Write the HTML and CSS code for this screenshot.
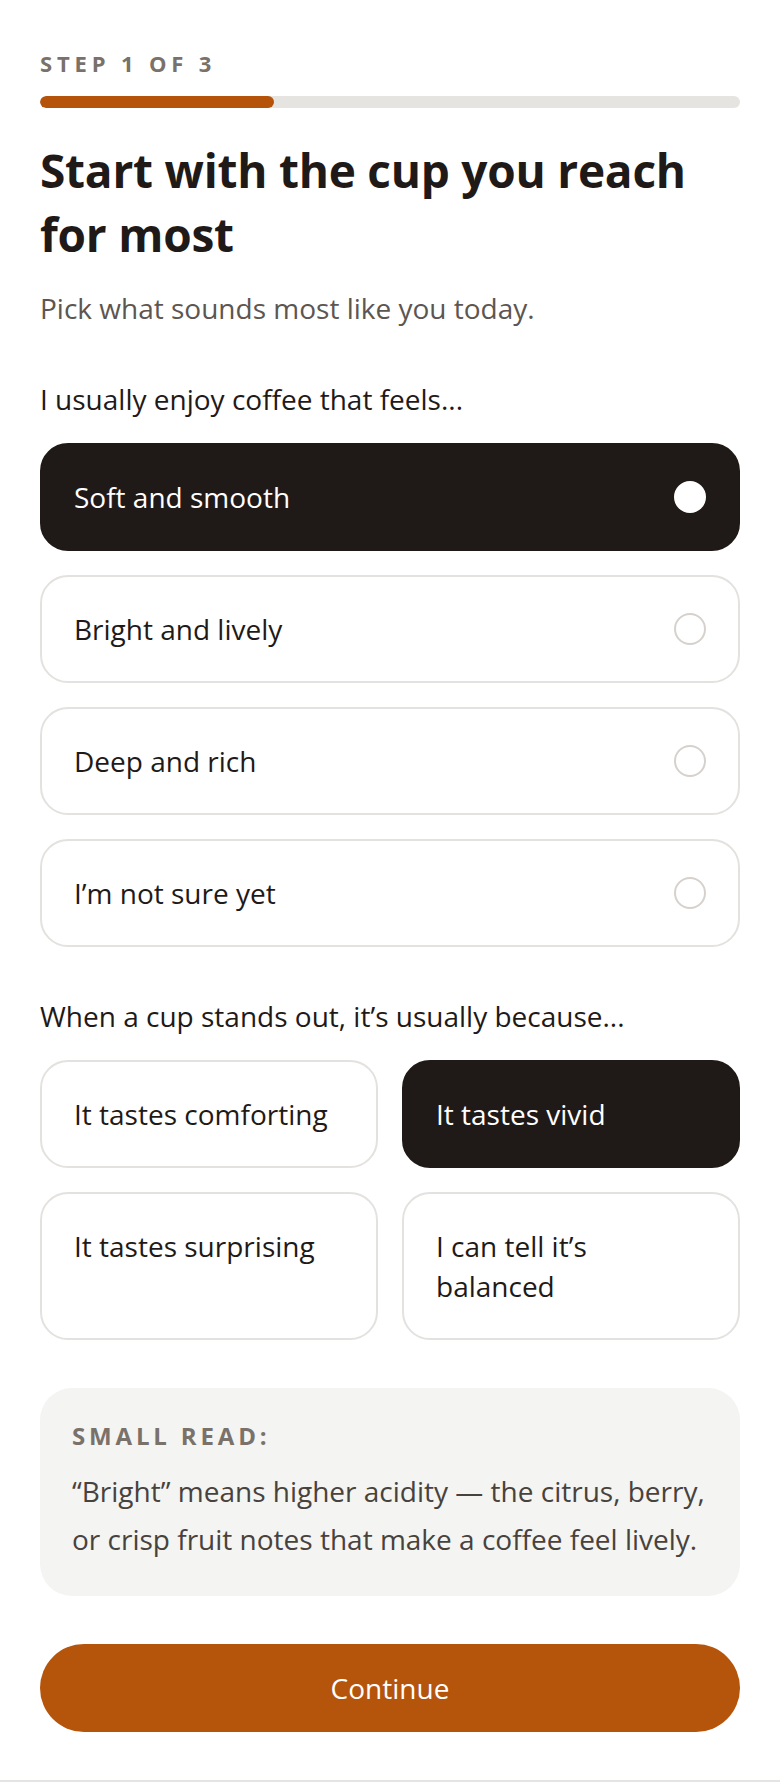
FILE: index.html
```html
<!DOCTYPE html>
<html lang="en">
<head>
    <meta charset="UTF-8">
    <meta name="viewport" content="width=device-width, initial-scale=1.0">
    <title>Coffee Quiz - Step 1</title>
    <link rel="stylesheet" href="styles.css">
</head>
<body>

    <div class="quiz-container">
        <div class="step-label">Step 1 of 3</div>
        <div class="progress-track">
            <div class="progress-fill"></div>
        </div>

        <h1>Start with the cup you reach for most</h1>
        <p class="subtitle">Pick what sounds most like you today.</p>

        <div class="question">
            <p class="question-label">I usually enjoy coffee that feels...</p>
            <div class="option-list">
                <button class="option selected">
                    <span>Soft and smooth</span>
                    <span class="radio"></span>
                </button>
                <button class="option">
                    <span>Bright and lively</span>
                    <span class="radio"></span>
                </button>
                <button class="option">
                    <span>Deep and rich</span>
                    <span class="radio"></span>
                </button>
                <button class="option">
                    <span>I’m not sure yet</span>
                    <span class="radio"></span>
                </button>
            </div>
        </div>

        <div class="question">
            <p class="question-label">When a cup stands out, it’s usually because...</p>
            <div class="option-grid">
                <button class="option">It tastes comforting</button>
                <button class="option selected">It tastes vivid</button>
                <button class="option">It tastes surprising</button>
                <button class="option">I can tell it’s balanced</button>
            </div>
        </div>

        <div class="small-read">
            <div class="small-read-title">Small read:</div>
            <p>“Bright” means higher acidity — the citrus, berry, or crisp fruit notes that make a coffee feel lively.</p>
        </div>

        <button class="continue-button">Continue</button>
    </div>

</body>
</html>
```

FILE: styles.css
```css
body {
    font-family: 'Open Sans', 'Noto Sans', sans-serif;
    background-color: #ffffff;
    margin: 0;
    color: #1f1a17;
}

.quiz-container {
    padding: 48px 40px 48px;
    border-bottom: 2px solid #e6e4e1;
}

.step-label {
    font-size: 22px;
    line-height: 30px;
    font-weight: 700;
    letter-spacing: 0.22em;
    text-transform: uppercase;
    color: #7a716a;
}

.progress-track {
    margin-top: 18px;
    height: 12px;
    border-radius: 6px;
    background-color: #e6e4e1;
    overflow: hidden;
}

.progress-fill {
    width: 33.4%;
    height: 100%;
    border-radius: 6px;
    background-color: #b5530b;
}

h1 {
    margin: 30px 0 0;
    font-size: 46px;
    line-height: 64px;
    font-weight: 700;
    letter-spacing: -0.005em;
    color: #1f1a17;
}

.subtitle {
    margin: 22px 0 0;
    font-size: 28px;
    line-height: 40px;
    color: #5d5650;
}

.question {
    margin-top: 51px;
}

.question + .question {
    margin-top: 49px;
}

.question-label {
    margin: 0 0 24px;
    font-size: 28px;
    line-height: 40px;
    color: #1f1a17;
}

.option-list {
    display: flex;
    flex-direction: column;
    gap: 24px;
}

.option-grid {
    display: grid;
    grid-template-columns: 1fr 1fr;
    gap: 24px;
    align-items: stretch;
}

.option {
    display: flex;
    align-items: center;
    justify-content: space-between;
    padding: 32px 32px;
    border: 2px solid #e4e2df;
    border-radius: 28px;
    background-color: #ffffff;
    font-family: inherit;
    font-size: 28px;
    line-height: 40px;
    color: #1f1a17;
    text-align: left;
    cursor: pointer;
}

.option-grid .option {
    align-items: flex-start;
}

.option.selected {
    background-color: #1f1a17;
    border-color: #1f1a17;
    color: #ffffff;
}

.radio {
    width: 32px;
    height: 32px;
    box-sizing: border-box;
    border: 2px solid #d6d1cd;
    border-radius: 50%;
    flex-shrink: 0;
}

.option.selected .radio {
    background-color: #ffffff;
    border-color: #ffffff;
}

.small-read {
    margin-top: 48px;
    padding: 32px 32px 33px;
    border-radius: 32px;
    background-color: #f4f4f2;
}

.small-read-title {
    font-size: 24px;
    line-height: 32px;
    font-weight: 700;
    letter-spacing: 0.16em;
    text-transform: uppercase;
    color: #7a716a;
}

.small-read p {
    margin: 15px 0 0;
    font-size: 28px;
    line-height: 48px;
    color: #48423d;
}

.continue-button {
    display: block;
    width: 100%;
    margin-top: 48px;
    height: 88px;
    border: none;
    border-radius: 44px;
    background-color: #b5540b;
    font-family: inherit;
    font-size: 28px;
    color: #ffffff;
    cursor: pointer;
}
```
